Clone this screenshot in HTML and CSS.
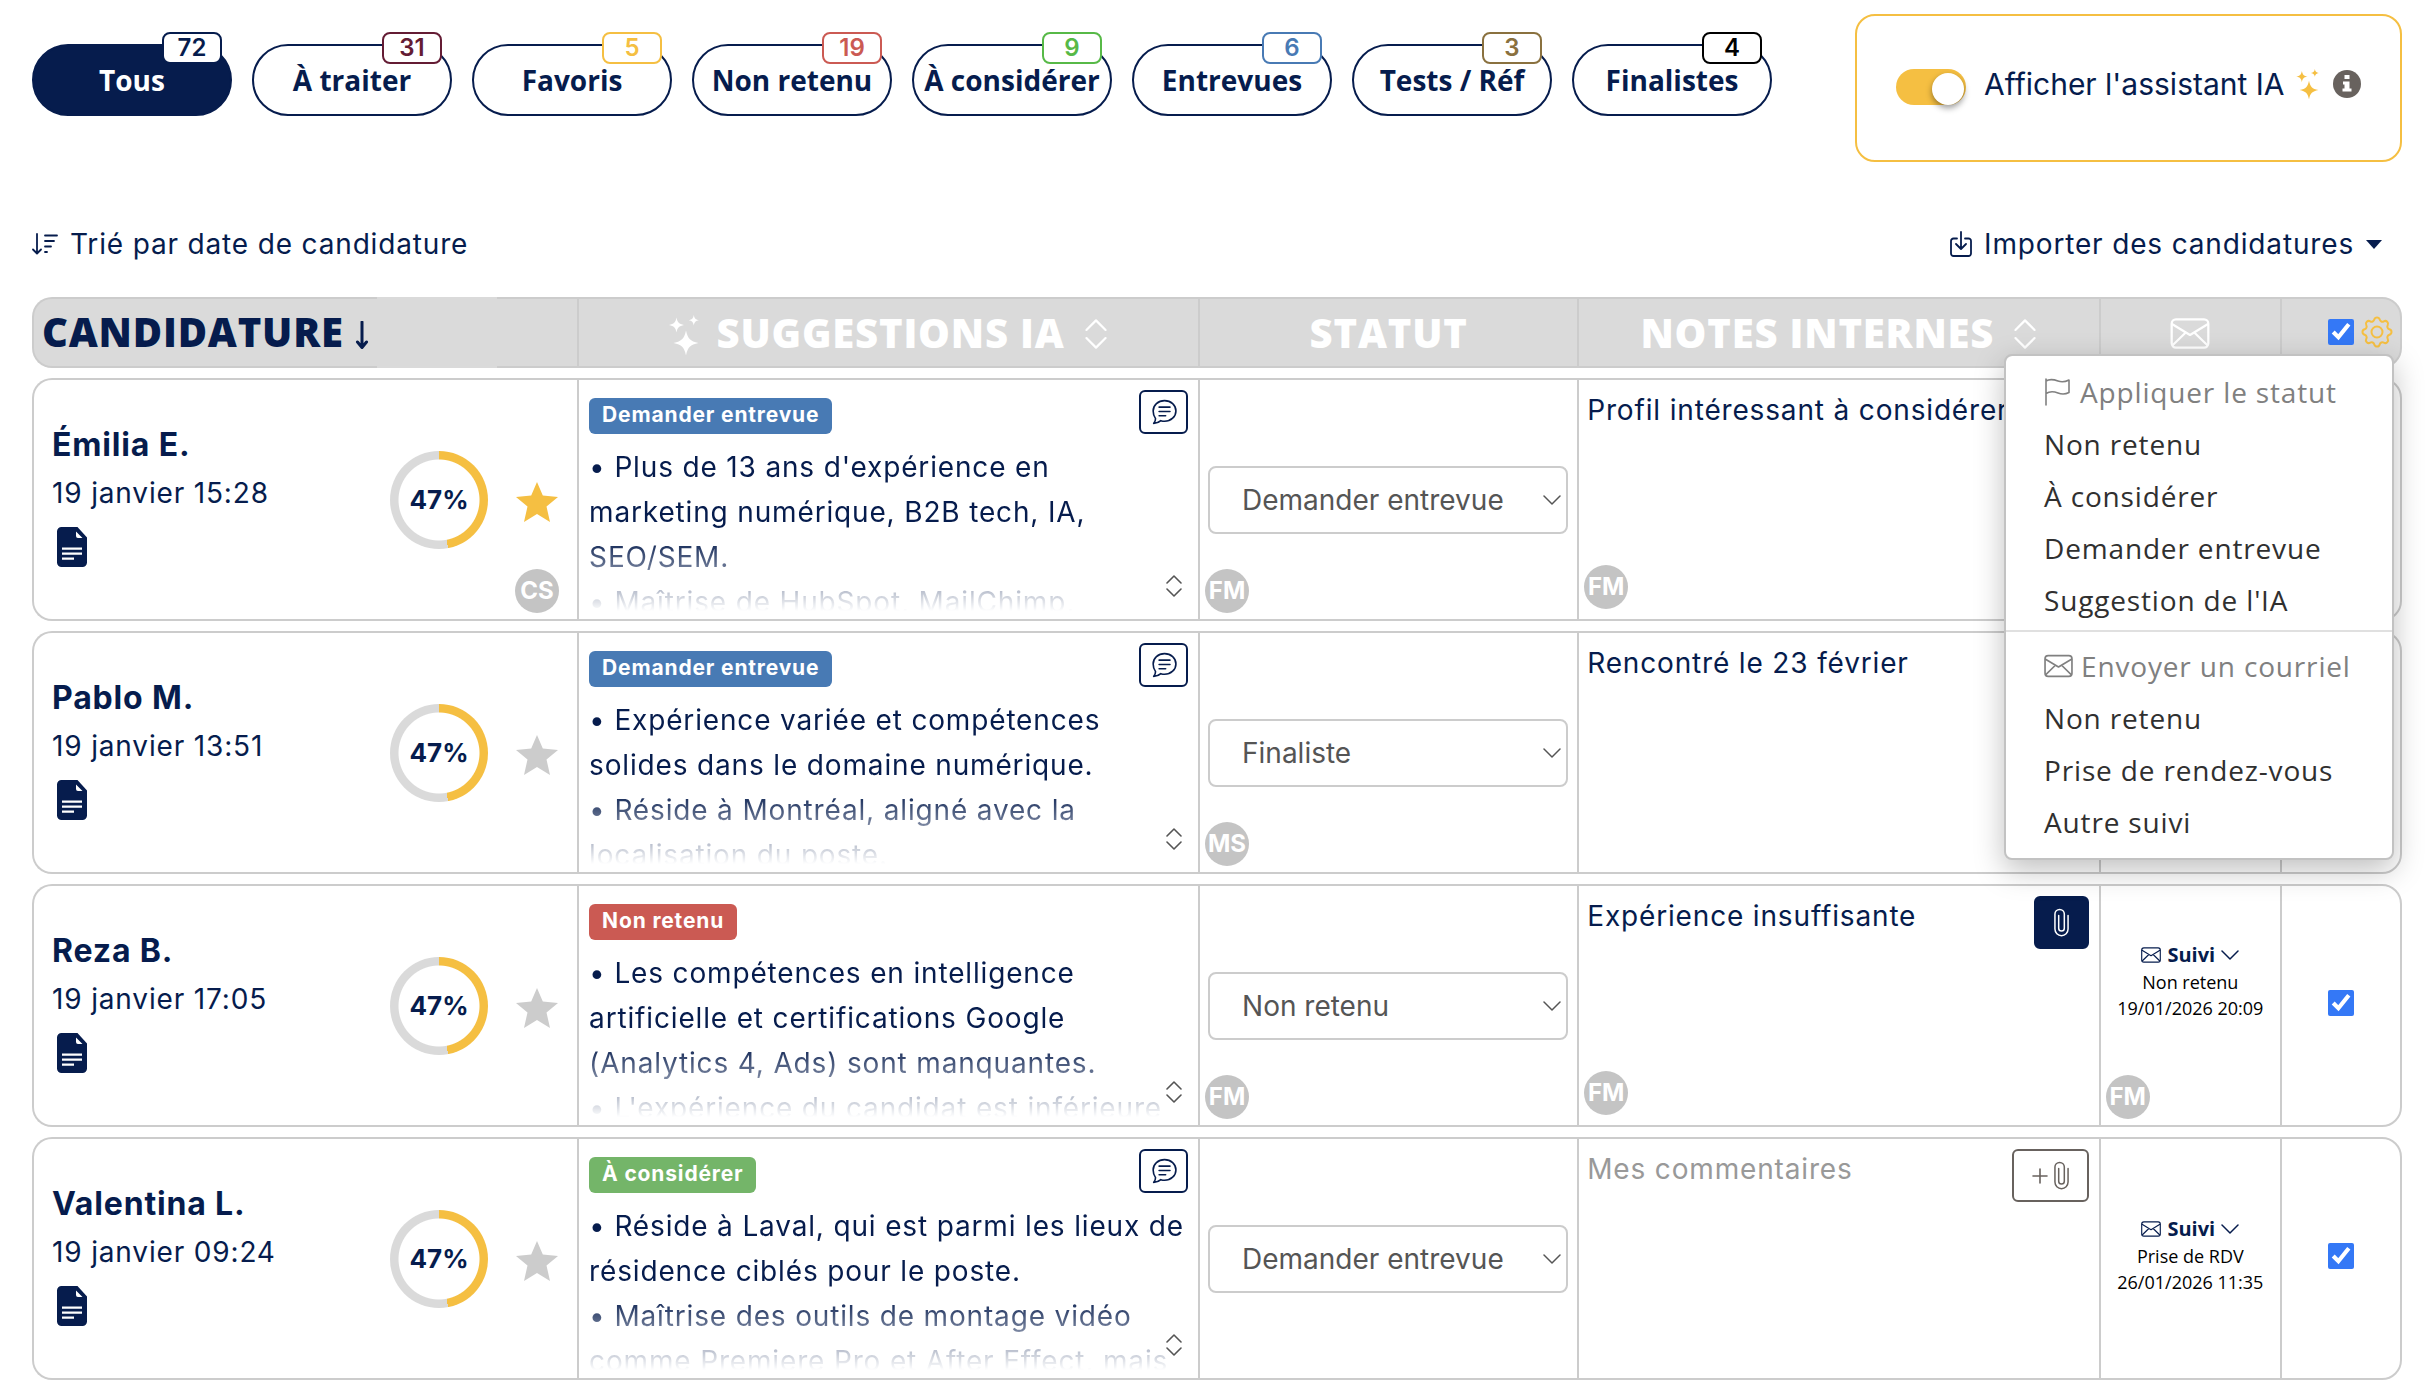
FILE: index.html
```html
<!doctype html>
<html lang="fr">
  <head>
    <meta charset="UTF-8" />
    <meta name="viewport" content="width=device-width, initial-scale=1.0" />
    <title>Candidatures</title>
    <link rel="stylesheet" href="styles.css">
  </head>
  <body>
    <!-- Icons (shared symbols) -->
    <svg class="sprite" aria-hidden="true">
      <symbol id="i-stars" viewBox="0 0 30 40">
        <path d="M17 15.500c1.700 8 4 10.700 12.500 12.500-8.500 1.800-10.800 4.500-12.500 12.500-1.700-8-4-10.700-12.500-12.500 8.500-1.800 10.800-4.500 12.500-12.500zM7.500 2.500c1 5 2.500 6.500 7.500 7.500-5 1-6.500 2.500-7.500 7.500-1-5-2.500-6.500-7.500-7.500 5-1 6.500-2.500 7.500-7.500zM24.800 0c.7 3.500 1.700 4.500 5.200 5.200-3.500.7-4.500 1.700-5.200 5.200-.7-3.500-1.700-4.500-5.200-5.200 3.500-.7 4.500-1.700 5.200-5.200z" />
      </symbol>
      <symbol id="i-mail" viewBox="0 0 28 22">
        <g fill="none" stroke="currentColor" stroke-width="1.600" stroke-linejoin="round" stroke-linecap="round">
          <rect x="1" y="1" width="26" height="20" rx="3" />
          <path d="M1.500 4.500 14 12l12.500-7.500M2 19l9-8.700M26 19l-9-8.700" />
        </g>
      </symbol>
      <symbol id="i-updown" viewBox="0 0 16 22">
        <path d="M1 8 8 1l7 7M1 14l7 7 7-7" fill="none" stroke="currentColor" stroke-width="1.600" stroke-linecap="round" stroke-linejoin="round" />
      </symbol>
      <symbol id="i-chevron" viewBox="0 0 18 10">
        <path d="m1 1 8 8 8-8" fill="none" stroke="currentColor" stroke-width="1.500" stroke-linecap="round" stroke-linejoin="round" />
      </symbol>
      <symbol id="i-doc" viewBox="0 0 30 40">
        <path d="M4.500 0H19v7.500A3.500 3.500 0 0 0 22.500 11H30v24.500a4.500 4.500 0 0 1-4.500 4.500h-21A4.500 4.500 0 0 1 0 35.500v-31A4.500 4.500 0 0 1 4.500 0z" />
        <path d="M18 0h2.500L30 10.500V13h-8a4 4 0 0 1-4-4z" />
        <path d="M19 4.500 25.500 11H21a2 2 0 0 1-2-2zM5 20.500h20v2.200H5zM5 25.500h20v2.200H5zM5 30.500h12v2.200H5z" fill="#fff" />
      </symbol>
      <symbol id="i-star" viewBox="0 0 42 40">
        <path d="m21 0 5.800 13.500L42 15 30.500 24.500 34 40l-13-8-13 8 3.500-15.500L0 15l15.200-1.500z" />
      </symbol>
      <symbol id="i-chat" viewBox="0 0 24 24">
        <g fill="none" stroke="currentColor" stroke-width="1.500" stroke-linecap="round" stroke-linejoin="round">
          <path d="M12.500 1.500C18.500 1.500 23 5.700 23 11s-4.500 9.500-10.500 9.500c-1.200 0-2.300-.2-3.400-.500C7.500 21.500 5 22.500 2.500 22.500c1-1 1.700-2.700 1.700-4.400C2.800 16.200 2 13.800 2 11c0-5.300 4.500-9.500 10.500-9.500z" />
          <path d="M7.500 7.500h10M7.500 11.500h10M7.500 15.500h6" />
        </g>
      </symbol>
      <symbol id="i-clip" viewBox="0 0 16 30">
        <path d="M5 7.500V21a3 3 0 0 0 6 0V6a5 5 0 0 0-10 0v16a7 7 0 0 0 14 0V7.500" fill="none" stroke="currentColor" stroke-width="1.600" stroke-linecap="round" />
      </symbol>
    </svg>

    <header class="topbar">
      <nav class="filters">
        <button class="filter active">Tous<span class="count navy">72</span></button>
        <button class="filter">À traiter<span class="count wine">31</span></button>
        <button class="filter">Favoris<span class="count gold">5</span></button>
        <button class="filter">Non retenu<span class="count red">19</span></button>
        <button class="filter">À considérer<span class="count green">9</span></button>
        <button class="filter">Entrevues<span class="count blue">6</span></button>
        <button class="filter">Tests / Réf<span class="count brown">3</span></button>
        <button class="filter">Finalistes<span class="count black">4</span></button>
      </nav>
      <div class="assistant">
        <input type="checkbox" class="switch" id="assistant" checked />
        <label for="assistant">Afficher l'assistant IA</label>
        <svg class="assistant-stars"><use href="#i-stars" /></svg>
        <svg class="info" viewBox="0 0 28 28">
          <circle cx="14" cy="14" r="14" />
          <path d="M11.500 5h5v4h-5zM10 11.500h6.500v7H18.500V21.500h-9v-3H11.500v-4H10z" fill="#fff" />
        </svg>
      </div>
    </header>

    <div class="toolbar">
      <button class="tool">
        <svg class="line sort-icon" viewBox="0 0 26 22" stroke-width="1.800">
          <path d="M5 1v19M1 16.500l4 4 4-4M13 2.500h12M13 8h9M13 13.500h6M13 19h2" />
        </svg>
        Trié par date de candidature
      </button>
      <button class="tool">
        <svg class="line import-icon" viewBox="0 0 22 26" stroke-width="1.800">
          <path d="M7 7.500H3.500A2.500 2.500 0 0 0 1 10v12.500A2.500 2.500 0 0 0 3.500 25h15a2.500 2.500 0 0 0 2.500-2.500V10a2.500 2.500 0 0 0-2.500-2.500H15M11 1v16.500M6 13l5 5 5-5" />
        </svg>
        Importer des candidatures
        <span class="caret"></span>
      </button>
    </div>

    <table class="candidates">
      <colgroup>
        <col class="c-name" />
        <col class="c-ai" />
        <col class="c-status" />
        <col class="c-notes" />
        <col class="c-mail" />
        <col class="c-check" />
      </colgroup>
      <thead>
        <tr>
          <th class="sorted">
            CANDIDATURE
            <svg class="line arrow" viewBox="0 0 14 28" stroke-width="3"><path d="M7 1v25M2.500 21 7 26.500 11.500 21" /></svg>
          </th>
          <th>
            <svg class="th-stars"><use href="#i-stars" /></svg>
            SUGGESTIONS IA
            <svg class="th-updown"><use href="#i-updown" /></svg>
          </th>
          <th>STATUT</th>
          <th>NOTES INTERNES <svg class="th-updown"><use href="#i-updown" /></svg></th>
          <th><svg class="th-mail"><use href="#i-mail" /></svg></th>
          <th class="actions">
            <div class="actions-inner">
              <input type="checkbox" class="check" aria-label="Tout cocher" checked />
              <button class="gear" aria-label="Actions">
                <svg class="line" viewBox="0 0 32 32" stroke-width="2">
                  <circle cx="16" cy="16" r="5.500" />
                  <path d="M13.300 3.600c.8-2.800 4.600-2.800 5.400 0a2.800 2.800 0 0 0 4.100 1.700c2.500-1.400 5.300 1.400 3.900 3.900a2.800 2.800 0 0 0 1.700 4.100c2.800.8 2.800 4.600 0 5.400a2.800 2.800 0 0 0-1.700 4.100c1.400 2.500-1.400 5.300-3.900 3.900a2.800 2.800 0 0 0-4.100 1.700c-.8 2.800-4.600 2.800-5.400 0a2.800 2.800 0 0 0-4.100-1.700c-2.500 1.400-5.300-1.400-3.900-3.900a2.800 2.800 0 0 0-1.700-4.100c-2.800-.8-2.800-4.600 0-5.400a2.800 2.800 0 0 0 1.700-4.100C3.900 6.700 6.700 3.900 9.200 5.300a2.800 2.800 0 0 0 4.100-1.700z" />
                </svg>
              </button>
            </div>
            <div class="menu">
              <p class="menu-title">
                <svg class="line menu-flag" viewBox="0 0 26 28" stroke-width="1.600">
                  <path d="M1 1v26M1 3c4-2.500 8-1.500 12 0s8 .5 11-1v12.500c-3 1.500-7 2-11 .5s-8-2-12 .5" />
                </svg>
                Appliquer le statut
              </p>
              <a href="#">Non retenu</a>
              <a href="#">À considérer</a>
              <a href="#">Demander entrevue</a>
              <a href="#">Suggestion de l'IA</a>
              <hr />
              <p class="menu-title">
                <svg class="menu-mail"><use href="#i-mail" /></svg>
                Envoyer un courriel
              </p>
              <a href="#">Non retenu</a>
              <a href="#">Prise de rendez-vous</a>
              <a href="#">Autre suivi</a>
            </div>
          </th>
        </tr>
      </thead>
      <tbody>
        <tr>
          <td>
            <div class="person">
              <div class="who">
                <strong>Émilia E.</strong>
                <span>19 janvier 15:28</span>
                <svg class="doc"><use href="#i-doc" /></svg>
              </div>
              <div class="ring">47%</div>
              <button class="fav on" aria-label="Favori"><svg><use href="#i-star" /></svg></button>
            </div>
            <span class="initials right">CS</span>
          </td>
          <td>
            <div class="ai">
              <div class="ai-head">
                <span class="tag blue">Demander entrevue</span>
                <button class="chat" aria-label="Commentaire"><svg><use href="#i-chat" /></svg></button>
              </div>
              <div class="ai-text">• Plus de 13 ans d'expérience en marketing numérique, B2B tech, IA, SEO/SEM.<br />• Maîtrise de HubSpot, MailChimp,</div>
              <button class="expand" aria-label="Agrandir"><svg><use href="#i-updown" /></svg></button>
            </div>
          </td>
          <td class="status">
            <div class="select-wrap">
              <select aria-label="Statut"><option>Demander entrevue</option></select>
              <svg><use href="#i-chevron" /></svg>
            </div>
            <span class="initials">FM</span>
          </td>
          <td class="notes">
            <div class="note">
              <textarea aria-label="Notes internes">Profil intéressant à considérer</textarea>
            </div>
            <span class="initials raised">FM</span>
          </td>
          <td></td>
          <td class="tick"><input type="checkbox" class="check" aria-label="Émilia E." checked /></td>
        </tr>
        <tr>
          <td>
            <div class="person">
              <div class="who">
                <strong>Pablo M.</strong>
                <span>19 janvier 13:51</span>
                <svg class="doc"><use href="#i-doc" /></svg>
              </div>
              <div class="ring">47%</div>
              <button class="fav" aria-label="Favori"><svg><use href="#i-star" /></svg></button>
            </div>
          </td>
          <td>
            <div class="ai">
              <div class="ai-head">
                <span class="tag blue">Demander entrevue</span>
                <button class="chat" aria-label="Commentaire"><svg><use href="#i-chat" /></svg></button>
              </div>
              <div class="ai-text">• Expérience variée et compétences solides dans le domaine numérique.<br />• Réside à Montréal, aligné avec la localisation du poste.</div>
              <button class="expand" aria-label="Agrandir"><svg><use href="#i-updown" /></svg></button>
            </div>
          </td>
          <td class="status">
            <div class="select-wrap">
              <select aria-label="Statut"><option>Finaliste</option></select>
              <svg><use href="#i-chevron" /></svg>
            </div>
            <span class="initials">MS</span>
          </td>
          <td class="notes">
            <div class="note">
              <textarea aria-label="Notes internes">Rencontré le 23 février</textarea>
            </div>
          </td>
          <td></td>
          <td class="tick"><input type="checkbox" class="check" aria-label="Pablo M." checked /></td>
        </tr>
        <tr>
          <td>
            <div class="person">
              <div class="who">
                <strong>Reza B.</strong>
                <span>19 janvier 17:05</span>
                <svg class="doc"><use href="#i-doc" /></svg>
              </div>
              <div class="ring">47%</div>
              <button class="fav" aria-label="Favori"><svg><use href="#i-star" /></svg></button>
            </div>
          </td>
          <td>
            <div class="ai">
              <div class="ai-head">
                <span class="tag red">Non retenu</span>
              </div>
              <div class="ai-text">• Les compétences en intelligence artificielle et certifications Google (Analytics 4, Ads) sont manquantes.<br />• L'expérience du candidat est inférieure</div>
              <button class="expand" aria-label="Agrandir"><svg><use href="#i-updown" /></svg></button>
            </div>
          </td>
          <td class="status">
            <div class="select-wrap">
              <select aria-label="Statut"><option>Non retenu</option></select>
              <svg><use href="#i-chevron" /></svg>
            </div>
            <span class="initials">FM</span>
          </td>
          <td class="notes">
            <div class="note">
              <textarea aria-label="Notes internes">Expérience insuffisante</textarea>
              <button class="attach filled" aria-label="Pièce jointe"><svg><use href="#i-clip" /></svg></button>
            </div>
            <span class="initials raised">FM</span>
          </td>
          <td class="followup signed">
            <button class="suivi"><svg class="s-mail"><use href="#i-mail" /></svg>Suivi<svg class="s-chev"><use href="#i-chevron" /></svg></button>
            <p>Non retenu<br />19/01/2026 20:09</p>
            <span class="initials">FM</span>
          </td>
          <td class="tick"><input type="checkbox" class="check" aria-label="Reza B." checked /></td>
        </tr>
        <tr>
          <td>
            <div class="person">
              <div class="who">
                <strong>Valentina L.</strong>
                <span>19 janvier 09:24</span>
                <svg class="doc"><use href="#i-doc" /></svg>
              </div>
              <div class="ring">47%</div>
              <button class="fav" aria-label="Favori"><svg><use href="#i-star" /></svg></button>
            </div>
          </td>
          <td>
            <div class="ai">
              <div class="ai-head">
                <span class="tag green">À considérer</span>
                <button class="chat" aria-label="Commentaire"><svg><use href="#i-chat" /></svg></button>
              </div>
              <div class="ai-text">• Réside à Laval, qui est parmi les lieux de résidence ciblés pour le poste.<br />• Maîtrise des outils de montage vidéo comme Premiere Pro et After Effect, mais</div>
              <button class="expand" aria-label="Agrandir"><svg><use href="#i-updown" /></svg></button>
            </div>
          </td>
          <td class="status">
            <div class="select-wrap">
              <select aria-label="Statut"><option>Demander entrevue</option></select>
              <svg><use href="#i-chevron" /></svg>
            </div>
          </td>
          <td class="notes">
            <div class="note">
              <textarea aria-label="Notes internes" placeholder="Mes commentaires"></textarea>
              <button class="attach" aria-label="Ajouter une pièce jointe">
                <svg class="plus" viewBox="0 0 16 16"><path d="M8 1v14M1 8h14" stroke="currentColor" stroke-width="1.600" stroke-linecap="round" /></svg>
                <svg><use href="#i-clip" /></svg>
              </button>
            </div>
          </td>
          <td class="followup">
            <button class="suivi"><svg class="s-mail"><use href="#i-mail" /></svg>Suivi<svg class="s-chev"><use href="#i-chevron" /></svg></button>
            <p>Prise de RDV<br />26/01/2026 11:35</p>
          </td>
          <td class="tick"><input type="checkbox" class="check" aria-label="Valentina L." checked /></td>
        </tr>
      </tbody>
    </table>
  </body>
</html>
```

FILE: styles.css
```css
* {
  margin: 0;
  padding: 0;
  box-sizing: border-box;
}

body {
  font-family: 'Inter', sans-serif;
  font-size: 28px;
  letter-spacing: 0.03em;
  color: #061c4d;
  background: #fff;
  padding: 14px 32px 0;
}

button,
select,
textarea {
  font: inherit;
  letter-spacing: inherit;
  color: inherit;
  background: none;
  border: none;
}

button {
  cursor: pointer;
}

svg {
  display: block;
  flex: none;
  fill: currentColor;
}

.line {
  fill: none;
  stroke: currentColor;
  stroke-linecap: round;
  stroke-linejoin: round;
}

.sprite {
  position: absolute;
  width: 0;
  height: 0;
}

/* Top bar */
.topbar {
  display: flex;
  justify-content: space-between;
  align-items: flex-start;
}

.filters {
  display: flex;
  gap: 20px;
  padding-top: 30px;
}

.filter {
  position: relative;
  width: 200px;
  height: 72px;
  border: 2px solid #061c4d;
  border-radius: 36px;
  font-family: 'Open Sans', sans-serif;
  font-weight: 700;
  letter-spacing: 0;
  white-space: nowrap;
}

.filter.active {
  background: #061c4d;
  color: #fff;
}

.count {
  position: absolute;
  top: -14px;
  right: 8px;
  width: 60px;
  height: 32px;
  border: 2px solid currentColor;
  border-radius: 8px;
  background: #fff;
  font-family: 'Inter', sans-serif;
  font-size: 24px;
  font-weight: 600;
  line-height: 28px;
}

.count.navy { color: #061c4d; }
.count.wine { color: #641c34; }
.count.gold { color: #f5bf42; }
.count.red { color: #cb5a53; }
.count.green { color: #57b947; }
.count.blue { color: #487ab4; }
.count.brown { color: #8a713f; }
.count.black { color: #000; }

.assistant {
  display: flex;
  align-items: center;
  width: 547px;
  height: 148px;
  padding: 0 39px 8px;
  border: 2px solid #f5bf42;
  border-radius: 20px;
  font-size: 30px;
  letter-spacing: 0;
}

.assistant label {
  margin: 0 11px 0 18px;
}

.switch {
  appearance: none;
  display: flex;
  justify-content: flex-end;
  align-items: center;
  width: 70px;
  height: 36px;
  margin-top: 6px;
  padding: 4px 2px 0;
  border-radius: 18px;
  background: #f5bf42;
}

.switch::after {
  content: '';
  width: 32px;
  height: 32px;
  border-radius: 50%;
  background: #fff;
  box-shadow: 0 3px 6px rgba(0, 0, 0, 0.4);
}

.assistant-stars {
  width: 23px;
  height: 30px;
  color: #f5bf42;
}

.info {
  width: 28px;
  height: 28px;
  margin-left: 14px;
  color: #68625e;
}

/* Toolbar */
.toolbar {
  display: flex;
  justify-content: space-between;
  padding: 64px 20px 35px 0;
}

.tool {
  display: flex;
  align-items: center;
  gap: 12px;
  line-height: 36px;
}

.sort-icon {
  width: 26px;
  height: 22px;
}

.import-icon {
  width: 22px;
  height: 26px;
}

.caret {
  border: 8px solid transparent;
  border-top: 9px solid currentColor;
  border-bottom: none;
}

/* Table */
.candidates {
  width: 100%;
  table-layout: fixed;
  border-collapse: separate;
  border-spacing: 0 10px;
  margin-top: -10px;
}

.c-name { width: 23%; }
.c-ai { width: 26.200%; }
.c-status { width: 16%; }
.c-notes { width: 22%; }
.c-mail { width: 180px; }
.c-check { width: 121px; }

th {
  position: relative;
  height: 71px;
  background: #dadada;
  border: solid #ccc;
  border-width: 2px 0 2px 2px;
  color: #fff;
  font-family: 'Open Sans', sans-serif;
  font-size: 40px;
  font-weight: 800;
  line-height: 60px;
  letter-spacing: 0.02em;
  white-space: nowrap;
}

th svg {
  display: inline-block;
}

th:first-child,
td:first-child {
  border-radius: 20px 0 0 20px;
}

th:last-child,
td:last-child {
  border-right-width: 2px;
  border-radius: 0 20px 20px 0;
}

.sorted {
  padding: 0 0 2px 8px;
  text-align: left;
  color: #061c4d;
}

.sorted::after {
  content: '';
  position: absolute;
  top: -2px;
  bottom: -2px;
  left: 343px;
  width: 120px;
  background: #dadada;
}

.arrow {
  width: 14px;
  height: 28px;
  vertical-align: -2px;
}

.th-stars {
  width: 30px;
  height: 40px;
  margin-right: 6px;
  vertical-align: -7px;
}

.th-updown {
  width: 24px;
  height: 30px;
  margin-left: 8px;
  vertical-align: -1px;
}

.th-mail {
  width: 40px;
  height: 31px;
  vertical-align: -1px;
}

.actions-inner {
  display: flex;
  align-items: center;
  justify-content: flex-end;
  gap: 7px;
  height: 60px;
  padding: 0 7px 2px 0;
}

.check {
  width: 26px;
  height: 26px;
  accent-color: #3478f6;
}

.gear {
  color: #f5bf42;
}

.gear svg {
  display: block;
  width: 32px;
  height: 32px;
}

/* Actions menu */
.menu {
  position: absolute;
  z-index: 2;
  top: 55px;
  right: 6px;
  width: 390px;
  padding: 10px 0;
  border: 2px solid #c2c2c2;
  border-radius: 8px;
  background: #fff;
  background-clip: padding-box;
  box-shadow: 0 10px 30px rgba(0, 0, 0, 0.25);
  font-size: 28px;
  font-weight: 400;
  line-height: 52px;
  letter-spacing: 0.03em;
  text-align: left;
}

.menu a,
.menu-title {
  display: flex;
  align-items: center;
  padding-left: 38px;
  color: #303030;
  text-decoration: none;
}

.menu .menu-title {
  color: #808080;
  gap: 8px;
}

.menu hr {
  border: none;
  border-top: 2px solid #e0e0e0;
  margin: 4px 0 8px;
}

.menu-flag {
  width: 28px;
  height: 28px;
}

.menu-mail {
  width: 29px;
  height: 24px;
}

/* Rows */
td {
  position: relative;
  height: 243px;
  border: solid #ccc;
  border-width: 2px 0 2px 2px;
}

.person {
  display: flex;
  align-items: center;
  padding: 0 19px 0 18px;
}

.who {
  display: flex;
  flex-direction: column;
  flex: 1;
  padding-bottom: 12px;
  line-height: 48px;
}

.who strong {
  font-size: 32px;
}

.doc {
  width: 30px;
  height: 40px;
  margin: 10px 0 0 5px;
}

.ring {
  display: flex;
  align-items: center;
  justify-content: center;
  width: 98px;
  height: 98px;
  border-radius: 50%;
  background:
    radial-gradient(circle, #fff 40px, transparent 41px),
    conic-gradient(#f5bf42 47%, #dadada 0);
  font-size: 26px;
  font-weight: 700;
  letter-spacing: 0;
}

.fav {
  margin-left: 28px;
  padding-top: 4px;
  color: #ccc;
}

.fav.on {
  color: #f5bf42;
}

.fav svg {
  width: 42px;
  height: 40px;
}

.initials {
  position: absolute;
  left: 5px;
  bottom: 6px;
  width: 44px;
  height: 44px;
  border-radius: 50%;
  background: #c4c4c4;
  color: #fff;
  font-family: 'Inter', sans-serif;
  font-size: 24px;
  font-weight: 700;
  line-height: 44px;
  letter-spacing: 0;
  text-align: center;
}

.initials.right {
  left: auto;
  right: 18px;
}

.initials.raised {
  bottom: 10px;
}

.ai {
  position: relative;
  height: 239px;
  padding: 10px;
}

.ai-head {
  display: flex;
  justify-content: space-between;
  align-items: flex-end;
  height: 44px;
}

.tag {
  height: 36px;
  padding: 0 13px;
  border-radius: 6px;
  color: #fff;
  font-size: 21px;
  font-weight: 700;
  line-height: 34px;
  letter-spacing: 0.04em;
}

.tag.blue { background: #487ab4; }
.tag.red { background: #cb5a53; }
.tag.green { background: #74b569; }

.chat {
  display: flex;
  align-items: center;
  justify-content: center;
  width: 49px;
  height: 44px;
  border: 2px solid #061c4d;
  border-radius: 6px;
}

.chat svg {
  width: 26px;
  height: 26px;
}

.ai-text {
  height: 166px;
  margin-top: 11px;
  overflow: hidden;
  line-height: 45px;
  mask-image: linear-gradient(#000 56%, transparent);
}

.expand {
  position: absolute;
  right: 15px;
  bottom: 22px;
  color: #555;
}

.expand svg {
  width: 18px;
  height: 22px;
}

.select-wrap {
  position: relative;
  margin: 0 9px 0 8px;
}

.select-wrap select {
  appearance: none;
  width: 100%;
  height: 68px;
  padding: 0 32px;
  border: 2px solid #ccc;
  border-radius: 8px;
  color: #555;
  letter-spacing: 0;
}

.select-wrap svg {
  position: absolute;
  right: 7px;
  top: 29px;
  width: 18px;
  height: 10px;
  color: #555;
  pointer-events: none;
}

.note {
  display: flex;
  align-items: flex-start;
  height: 239px;
  padding: 10px 10px 0 8px;
}

.note textarea {
  flex: 1;
  min-width: 0;
  height: 160px;
  line-height: 40px;
  resize: none;
}

.note textarea::placeholder {
  color: #999;
}

.attach {
  display: flex;
  align-items: center;
  justify-content: center;
  gap: 6px;
  min-width: 55px;
  height: 53px;
  padding: 0 18px;
  border: 2px solid #68625e;
  border-radius: 6px;
  color: #68625e;
}

.attach.filled {
  border-color: #061c4d;
  background: #061c4d;
  color: #fff;
}

.attach svg {
  width: 15px;
  height: 29px;
}

.attach .plus {
  width: 16px;
  height: 16px;
}

.followup {
  padding-bottom: 6px;
  color: #000;
  font-family: 'Open Sans', sans-serif;
  font-size: 18px;
  line-height: 26px;
  letter-spacing: 0;
  text-align: center;
}

/* leaves room for the initials badge */
.followup.signed {
  padding-bottom: 48px;
}

.suivi {
  display: inline-flex;
  align-items: center;
  gap: 6px;
  color: #061c4d;
  font-size: 20px;
  font-weight: 700;
}

.s-mail {
  width: 20px;
  height: 16px;
}

.s-chev {
  width: 18px;
  height: 10px;
}

.tick {
  text-align: center;
}
```
